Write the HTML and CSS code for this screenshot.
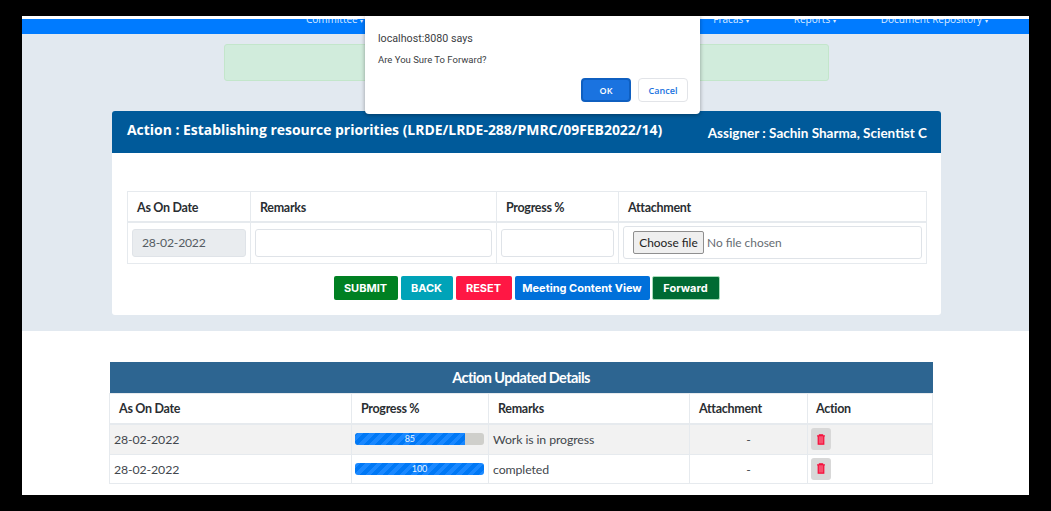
FILE: index.html
```html
<!DOCTYPE html>
<html lang="en">
<head>
<meta charset="utf-8">
<title>Action Update</title>
<link rel="stylesheet" href="styles.css">
</head>
<body>
<div class="frame">
  <nav class="nav">
    <span class="nav-item committee">Committee <span class="caret">▾</span></span>
    <span class="nav-item fracas">Fracas <span class="caret">▾</span></span>
    <span class="nav-item reports">Reports <span class="caret">▾</span></span>
    <span class="nav-item repo">Document Repository <span class="caret">▾</span></span>
  </nav>
  <section class="top">
    <div class="alert"></div>
    <div class="card">
      <header class="card-head">
        <h1 class="card-title">Action : Establishing resource priorities (LRDE/LRDE-288/PMRC/09FEB2022/14)</h1>
        <span class="assigner">Assigner : Sachin Sharma, Scientist C</span>
      </header>
      <div class="card-body">
        <table class="form-table">
          <colgroup><col class="f1"><col class="f2"><col class="f3"><col class="f4"></colgroup>
          <thead>
            <tr><th>As On Date</th><th>Remarks</th><th>Progress %</th><th>Attachment</th></tr>
          </thead>
          <tbody>
            <tr>
              <td><input class="field readonly" type="text" value="28-02-2022" readonly></td>
              <td><input class="field" type="text"></td>
              <td><input class="field" type="text"></td>
              <td><div class="file-box"><span class="file-btn">Choose file</span><span class="file-none">No file chosen</span></div></td>
            </tr>
          </tbody>
        </table>
        <div class="actions">
          <button class="btn submit">SUBMIT</button>
          <button class="btn back">BACK</button>
          <button class="btn reset">RESET</button>
          <button class="btn view">Meeting Content View</button>
          <button class="btn forward">Forward</button>
        </div>
      </div>
    </div>
  </section>
  <section class="bottom">
    <table class="detail-table">
      <colgroup><col class="d1"><col class="d2"><col class="d3"><col class="d4"><col class="d5"></colgroup>
      <thead>
        <tr><th class="detail-title" colspan="5">Action Updated Details</th></tr>
        <tr class="detail-head"><th>As On Date</th><th>Progress %</th><th>Remarks</th><th>Attachment</th><th class="last-head">Action</th></tr>
      </thead>
      <tbody>
        <tr class="alt">
          <td>28-02-2022</td>
          <td><div class="bar"><div class="fill fill-85">85</div></div></td>
          <td>Work is in progress</td>
          <td class="center">-</td>
          <td><span class="del"><svg class="trash" viewBox="0 0 12 14"><path d="M4 2V1h4v1M1 2.500h10M2.500 3v10h7V3" fill="#f7506e" stroke="#f5103c" stroke-width="1.600"/></svg></span></td>
        </tr>
        <tr class="plain">
          <td>28-02-2022</td>
          <td><div class="bar"><div class="fill fill-100">100</div></div></td>
          <td>completed</td>
          <td class="center">-</td>
          <td><span class="del"><svg class="trash" viewBox="0 0 12 14"><path d="M4 2V1h4v1M1 2.500h10M2.500 3v10h7V3" fill="#f7506e" stroke="#f5103c" stroke-width="1.600"/></svg></span></td>
        </tr>
      </tbody>
    </table>
  </section>
  <div class="dialog">
    <div class="dialog-origin">localhost:8080 says</div>
    <div class="dialog-msg">Are You Sure To Forward?</div>
    <div class="dialog-actions">
      <button class="dlg-btn ok">OK</button>
      <button class="dlg-btn cancel">Cancel</button>
    </div>
  </div>
</div>
</body>
</html>
```
FILE: styles.css
```css
* { box-sizing: border-box; }
html, body { margin: 0; height: 100%; }
body {
  background: #000;
  padding: 16px 22px;
  font-family: "Lato", "Liberation Sans", sans-serif;
  color: #212529;
  overflow: hidden;
}
.frame {
  position: relative;
  width: 1007px;
  height: 479px;
  background: #fff;
  overflow: hidden;
}
.nav {
  height: 18px;
  border-top: 3px solid #fff;
  background: #007bff;
  display: flex;
  overflow: hidden;
  font-family: "Open Sans", sans-serif;
  font-size: 10px;
  line-height: 10px;
  color: #dcebff;
}
.nav-item { margin-top: -5px; white-space: nowrap; }
.caret { font-size: 6px; }
.committee { margin-left: 284px; }
.fracas { margin-left: 350px; }
.reports { margin-left: 45px; }
.repo { margin-left: 45px; }

.top {
  background: #e2e9f0;
  height: 297px;
  padding-top: 10px;
}
.alert {
  width: 605px;
  height: 37px;
  margin-left: 202px;
  background: #d1ecdc;
  border: 1px solid #c3e6cb;
  border-radius: 3px;
}
.card {
  width: 829px;
  height: 204px;
  margin: 30px 0 0 90px;
  background: #fff;
  border-radius: 3px;
  overflow: hidden;
}
.card-head {
  height: 42px;
  background: #005a9a;
  color: #fff;
  display: flex;
  justify-content: space-between;
  padding: 0 14px 0 15px;
}
.card-title {
  margin: 9px 0 0;
  font: 700 13.930px/20px "Open Sans", sans-serif;
}
.assigner {
  margin-top: 12px;
  font: 700 13.500px/20px "Lato", sans-serif;
}
.card-body { padding: 38px 15px 0 15px; }
table { border-collapse: collapse; table-layout: fixed; }
.form-table { width: 799px; }
.f1 { width: 123px; }
.f2 { width: 246px; }
.f3 { width: 122px; }
.f4 { width: 308px; }
.form-table th, .form-table td { border: 1px solid #e6eaee; }
.form-table th {
  height: 30px;
  padding: 2px 9px 0;
  border-bottom-width: 2px;
  text-align: left;
  font-size: 12.500px;
  letter-spacing: -0.300px;
  font-weight: 700;
  color: #2a2e32;
}
.form-table td { height: 42px; padding: 0 4px; }
.field {
  display: block;
  width: 100%;
  height: 28px;
  padding: 0 9px;
  border: 1px solid #dfe3e8;
  border-radius: 3px;
  background: #fff;
  font: 12.200px "Lato", sans-serif;
  letter-spacing: -0.200px;
  color: #555c63;
}
.readonly { background: #e9ecef; }
.file-box {
  display: flex;
  align-items: center;
  height: 33px;
  padding-left: 9px;
  border: 1px solid #dfe3e8;
  border-radius: 3px;
  font-size: 11.900px;
  color: #666c72;
}
.file-btn {
  display: flex;
  align-items: center;
  justify-content: center;
  width: 71px;
  height: 23px;
  margin-right: 3px;
  background: #efefef;
  border: 1px solid #8f8f8f;
  border-radius: 2px;
  color: #222;
}
.actions {
  display: flex;
  justify-content: center;
  gap: 3px;
  margin-top: 12px;
}
.btn {
  height: 24px;
  padding: 0;
  border: 0;
  border-radius: 2px;
  color: #fff;
  font: 700 11px "Inter", sans-serif;
}
.submit { width: 64px; background: #008022; }
.back { width: 52px; background: #00a3b8; }
.reset { width: 56px; background: #ff1744; }
.view { width: 135px; background: #0070da; }
.forward { width: 68px; margin-left: -1px; background: #006b33; border: 1px solid #a5dcb8; }

.bottom { padding: 31px 0 0 87px; }
.detail-table { width: 823px; }
.d1 { width: 242px; }
.d2 { width: 137px; }
.d3 { width: 201px; }
.d4 { width: 118px; }
.d5 { width: 125px; }
.detail-title {
  height: 31px;
  background: #2d6591;
  color: #fff;
  font-size: 14.500px;
  font-weight: 700;
  letter-spacing: -0.570px;
  text-align: center;
}
.detail-head th {
  height: 31px;
  padding: 1px 9px 0;
  border: 1px solid #e6eaee;
  border-bottom-width: 2px;
  text-align: left;
  font-size: 12.500px;
  letter-spacing: -0.300px;
  font-weight: 700;
  color: #2a2e32;
}
.detail-head .last-head { padding-left: 8px; }
.detail-table td {
  height: 30px;
  padding: 1px 4px 0;
  border: 1px solid #e6eaee;
  font-size: 12.300px;
  letter-spacing: -0.100px;
  color: #42474d;
}
.detail-table .plain td { height: 29px; }
.alt td { background: #f2f2f2; }
.detail-table .center { text-align: center; }
.bar {
  height: 12px;
  margin: -1px 0 0 -1px;
  background: #cfcfcb;
  border-radius: 3px;
  overflow: hidden;
}
.fill {
  height: 12px;
  background: repeating-linear-gradient(-45deg, #1a88ff 0 4px, #0078f5 4px 8px);
  color: #e8f3ff;
  font-size: 9px;
  line-height: 12px;
  text-align: center;
}
.fill-85 { width: 85%; }
.fill-100 { width: 100%; }
.del {
  display: flex;
  align-items: center;
  justify-content: center;
  width: 20px;
  height: 22px;
  margin: -1px 0 0 -1px;
  background: #d8d8d8;
  border-radius: 3px;
}
.trash { width: 10px; height: 11px; }

.dialog {
  position: absolute;
  left: 343px;
  top: 0;
  width: 335px;
  height: 98px;
  padding: 15px 13px 0;
  background: #fff;
  border-radius: 0 0 4px 4px;
  box-shadow: 0 1px 4px rgba(0, 0, 0, 0.35);
  font-family: "Roboto", sans-serif;
}
.dialog-origin { font-size: 10.700px; line-height: 15px; color: #3c4043; }
.dialog-msg { margin-top: 7px; font-size: 9.500px; line-height: 13px; color: #3c4043; }
.dialog-actions {
  position: absolute;
  right: 12px;
  bottom: 12px;
  display: flex;
  gap: 7px;
}
.dlg-btn {
  width: 50px;
  height: 24px;
  padding: 0;
  border-radius: 4px;
  font: 600 9px "Open Sans", sans-serif;
}
.ok { background: #1a73e0; color: #fff; border: 2px solid #0f5fc0; }
.cancel { background: #fff; color: #1a73e0; border: 1px solid #e2e4e8; }
```
